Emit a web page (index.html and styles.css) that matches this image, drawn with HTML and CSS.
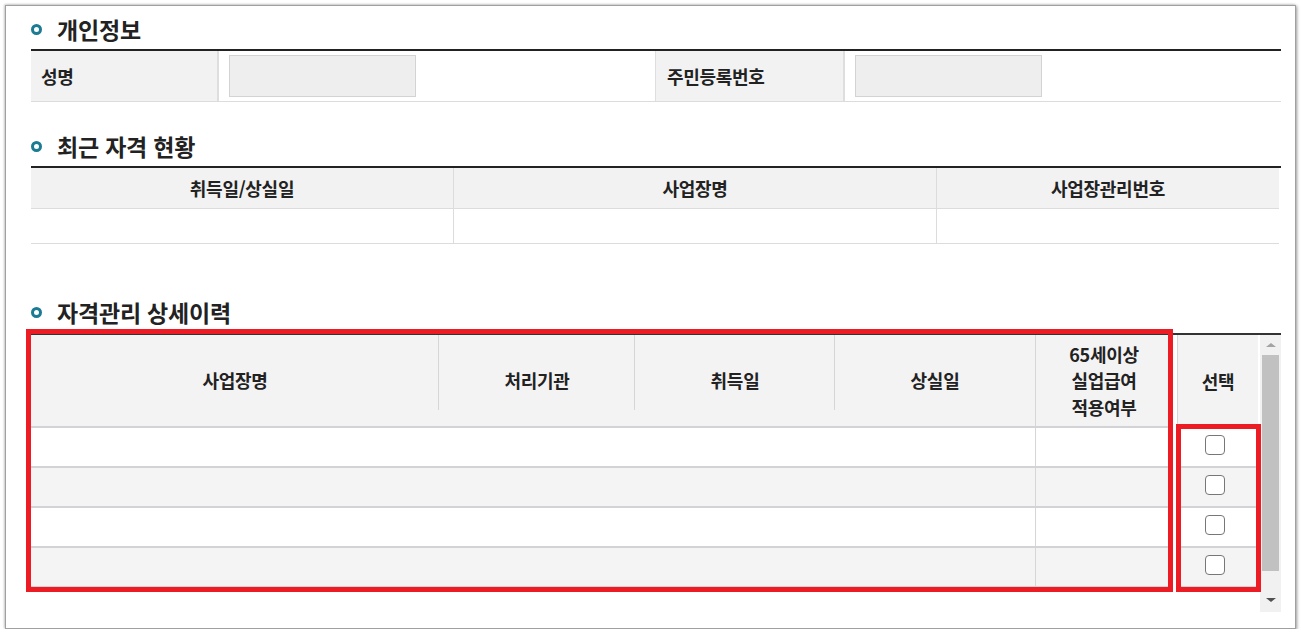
FILE: index.html
```html
<!DOCTYPE html>
<html lang="ko">
<head>
<meta charset="utf-8">
<title>자격관리</title>
<link rel="stylesheet" href="styles.css">
</head>
<body>
<div class="panel">
  <section class="sec sec-info">
    <h2 class="sec-title"><span class="bullet"></span>개인정보</h2>
    <div class="info-table">
      <div class="info-th">성명</div>
      <div class="info-td"><span class="field"></span></div>
      <div class="info-th info-th--second">주민등록번호</div>
      <div class="info-td"><span class="field"></span></div>
    </div>
  </section>

  <section class="sec sec-recent">
    <h2 class="sec-title"><span class="bullet"></span>최근 자격 현황</h2>
    <div class="recent-table">
      <div class="rt-row rt-head">
        <div class="rt-cell">취득일/상실일</div>
        <div class="rt-cell">사업장명</div>
        <div class="rt-cell">사업장관리번호</div>
      </div>
      <div class="rt-row rt-body">
        <div class="rt-cell"></div>
        <div class="rt-cell"></div>
        <div class="rt-cell"></div>
      </div>
    </div>
  </section>

  <section class="sec sec-history">
    <h2 class="sec-title"><span class="bullet"></span>자격관리 상세이력</h2>
    <div class="grid">
      <div class="grid-main">
        <div class="gm-head">
          <div class="gh gh-div gh-c1">사업장명</div>
          <div class="gh gh-div gh-c2">처리기관</div>
          <div class="gh gh-div gh-c3">취득일</div>
          <div class="gh gh-c4">상실일</div>
          <div class="gh gh-c5">65세이상<br>실업급여<br>적용여부</div>
        </div>
        <div class="gm-row"><div class="gm-wide"></div><div class="gm-c5"></div></div>
        <div class="gm-row gm-row--alt"><div class="gm-wide"></div><div class="gm-c5"></div></div>
        <div class="gm-row"><div class="gm-wide"></div><div class="gm-c5"></div></div>
        <div class="gm-row gm-row--alt"><div class="gm-wide"></div><div class="gm-c5"></div></div>
      </div>
      <div class="grid-select">
        <div class="gs-head">선택</div>
        <div class="gs-row"><input type="checkbox" class="chk" aria-label="선택 1"></div>
        <div class="gs-row gs-row--alt"><input type="checkbox" class="chk" aria-label="선택 2"></div>
        <div class="gs-row"><input type="checkbox" class="chk" aria-label="선택 3"></div>
        <div class="gs-row gs-row--alt"><input type="checkbox" class="chk" aria-label="선택 4"></div>
      </div>
      <div class="scrollbar">
        <span class="sb-btn sb-up"><span class="tri tri-up"></span></span>
        <span class="sb-thumb"></span>
        <span class="sb-btn sb-down"><span class="tri tri-down"></span></span>
      </div>
    </div>
  </section>

  <div class="mark mark-main"></div>
  <div class="mark mark-select"></div>
</div>
</body>
</html>
```

FILE: styles.css
```css
* { box-sizing: border-box; }
html, body { margin: 0; padding: 0; background: #fff; }
body {
  font-family: "Noto Sans CJK KR", "Noto Sans", sans-serif;
  color: #222;
}

.panel {
  position: relative;
  margin: 5px 0 0 5px;
  width: 1291px;
  height: 624px;
  border: 1px solid #a0a0a0;
  box-shadow: 1px 1px 3px rgba(0, 0, 0, 0.4), -1px -1px 2px rgba(0, 0, 0, 0.15);
  padding: 8px 14px 0 25px;
  background: #fff;
}

.sec-title {
  display: flex;
  align-items: center;
  height: 30px;
  margin: 0 0 5px;
  font-size: 23px;
  font-weight: 700;
  line-height: 30px;
  letter-spacing: -0.2px;
}
.bullet {
  flex: none;
  width: 11px;
  height: 11px;
  border: 3px solid #1a7b92;
  border-radius: 50%;
  margin-right: 15px;
}
.sec-recent { margin-top: 29px; }
.sec-history { margin-top: 53px; }
.sec-history .sec-title { margin-bottom: 6px; }

/* 개인정보 */
.info-table {
  display: grid;
  grid-template-columns: 188px 436px 190px 436px;
  height: 53px;
  border-top: 2px solid #222;
  border-bottom: 1px solid #dcdcdc;
}
.info-th {
  display: flex;
  align-items: center;
  padding-left: 10px;
  background: #f2f2f2;
  border-right: 2px solid #dedede;
  font-size: 18px;
  font-weight: 700;
  letter-spacing: -0.3px;
}
.info-th--second { border-left: 1px solid #dedede; padding-left: 11px; }
.info-td { display: flex; align-items: center; padding-left: 10px; }
.field {
  width: 187px;
  height: 42px;
  background: #eee;
  border: 1px solid #d3d3d3;
}

/* 최근 자격 현황 */
.recent-table { border-top: 2px solid #222; }
.rt-row {
  display: grid;
  grid-template-columns: 422px 483px 343px;
  border-bottom: 1px solid #dcdcdc;
  width: 1248px;
}
.rt-head { height: 41px; background: #f2f2f2; }
.rt-body { height: 35px; }
.rt-cell {
  display: flex;
  align-items: center;
  justify-content: center;
  font-size: 18px;
  font-weight: 700;
  letter-spacing: -0.3px;
}
.rt-cell + .rt-cell { border-left: 1px solid #dcdcdc; }

/* 자격관리 상세이력 */
.grid {
  display: flex;
  align-items: flex-start;
  height: 279px;
  border-top: 2px solid #333;
}
.grid-main { flex: none; width: 1141px; }
.gm-head {
  display: flex;
  height: 93px;
  background: #f3f3f3;
  border-bottom: 2px solid #d3d3d7;
}
.gh {
  display: flex;
  align-items: center;
  justify-content: center;
  text-align: center;
  font-size: 18px;
  font-weight: 700;
  line-height: 26.5px;
  letter-spacing: -0.3px;
}
.gh-div {
  background-image: linear-gradient(#d6d6d6, #d6d6d6);
  background-repeat: no-repeat;
  background-size: 1px 75px;
  background-position: right top;
}
.gh-c1 { width: 408px; }
.gh-c2 { width: 196px; }
.gh-c3 { width: 200px; }
.gh-c4 { width: 200px; }
.gh-c5 { flex: 1; border-left: 1px solid #d6d6d6; }

.gm-row {
  display: flex;
  height: 40px;
  border-bottom: 2px solid #d3d3d7;
  background: #fff;
}
.gm-row--alt { background: #f4f4f4; }
.gm-wide { width: 1004px; }
.gm-c5 { flex: 1; border-left: 1px solid #d6d6d6; }

.grid-select {
  flex: none;
  width: 81px;
  margin-left: 5px;
  border-left: 1px solid #d6d6d6;
}
.gs-head {
  display: flex;
  align-items: center;
  justify-content: center;
  height: 93px;
  background: #f3f3f3;
  border-bottom: 2px solid #d3d3d7;
  font-size: 18px;
  font-weight: 700;
  letter-spacing: -0.3px;
}
.gs-row {
  display: flex;
  align-items: center;
  justify-content: center;
  height: 40px;
  border-bottom: 2px solid #d3d3d7;
  background: #fff;
}
.gs-row--alt { background: #f4f4f4; }
.chk {
  -webkit-appearance: none;
  appearance: none;
  width: 20px;
  height: 20px;
  margin: 0 6px 4px 0;
  border: 1px solid #777;
  border-radius: 4px;
  background: #fff;
}

.scrollbar {
  flex: none;
  display: flex;
  flex-direction: column;
  align-items: center;
  width: 21px;
  height: 277px;
  margin-left: 2px;
  background: #f1f1f1;
}
.sb-btn { display: flex; align-items: center; justify-content: center; width: 21px; }
.sb-up { height: 20px; }
.sb-down { height: 16px; margin-top: auto; margin-bottom: 4px; }
.sb-thumb { width: 17px; height: 216px; background: #c1c1c1; }
.tri { width: 0; height: 0; border-left: 5px solid transparent; border-right: 5px solid transparent; }
.tri-up { border-bottom: 4px solid #a3a3a3; }
.tri-down { border-top: 4px solid #505050; }

/* annotation marks */
.mark {
  position: absolute;
  border: 5px solid #ed1c24;
}
.mark-main { left: 20px; top: 323px; width: 1147px; height: 263px; }
.mark-select { left: 1170px; top: 418px; width: 85px; height: 168px; }
```
